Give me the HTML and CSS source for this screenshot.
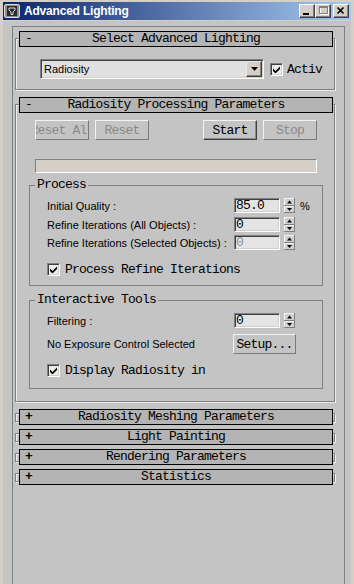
FILE: index.html
```
<!DOCTYPE html>
<html>
<head>
<meta charset="utf-8">
<title>Advanced Lighting</title>
<link rel="stylesheet" href="styles.css">
</head>
<body>
<div class="window">
  <div class="titlebar">
    <svg class="app-icon" width="16" height="14" viewBox="0 0 16 14">
      <rect x="0.5" y="0.5" width="15" height="13" rx="1.5" fill="#8e8e8e" stroke="#dcdcdc"/>
      <rect x="3" y="2" width="10" height="10" fill="#2c2c2c"/>
      <path d="M5 4h6v2l-2 2v2.5H7V8L5 6z" fill="none" stroke="#d8d8d8"/>
    </svg>
    <span class="title">Advanced Lighting</span>
    <div class="caption-btns">
      <span class="cbtn"><svg width="14" height="12" viewBox="0 0 14 12"><rect x="3" y="8" width="6" height="2" fill="#000"/></svg></span>
      <span class="cbtn"><svg width="14" height="12" viewBox="0 0 14 12"><path d="M4.5 2.5h8v7h-8z" fill="none" stroke="#fff"/><path d="M3.5 1.5h8v7h-8z" fill="none" stroke="#808080"/><rect x="3" y="1" width="9" height="2" fill="#808080"/></svg></span>
      <span class="cbtn close"><svg width="14" height="12" viewBox="0 0 14 12"><path d="M3.5 2.5L9.5 8.5M9.5 2.5L3.5 8.5" stroke="#000" stroke-width="1.7"/></svg></span>
    </div>
  </div>
  <div class="client">
    <div class="panel">
      <section class="rollout">
        <div class="rh mono"><span class="rh-sign">-</span><span class="rh-title">Select Advanced Lighting</span><span></span></div>
        <div class="rbody body1">
          <div class="select-row">
            <div class="dropdown sunken"><span>Radiosity</span><span class="dd-btn"><svg width="7" height="4" viewBox="0 0 7 4"><path d="M0 0h7L3.5 4z" fill="#000"/></svg></span></div>
            <span class="check"><svg width="7" height="7" viewBox="0 0 7 7"><path d="M0 2.5L2.5 5L7 0.5V3L2.5 7.5L0 5z" fill="#000"/></svg></span>
            <span class="check-label mono">Activ</span>
          </div>
        </div>
      </section>

      <section class="rollout">
        <div class="rh mono"><span class="rh-sign">-</span><span class="rh-title">Radiosity Processing Parameters</span><span></span></div>
        <div class="rbody body2">
          <div class="btn-row">
            <span class="btn mono disabled">Reset All</span>
            <span class="btn mono disabled">Reset</span>
            <span class="btn mono start">Start</span>
            <span class="btn mono disabled">Stop</span>
          </div>
          <div class="progress"></div>

          <div class="group g1">
            <div class="group-title mono">Process</div>
            <div class="frow first">
              <span class="flabel">Initial Quality :</span>
              <span class="field sunken mono">85.0</span>
              <svg class="spin" width="11" height="15" viewBox="0 0 11 15"><rect width="11" height="15" fill="#d0d0d0"/><path d="M0 0.5H11M0.5 0V15M0 8.5H11" stroke="#f4f4f4"/><path d="M0 14.5H11M10.5 0V15M0 7.5H11" stroke="#808080"/><path d="M5.5 2.5L8 5.5H3z" fill="#000"/><path d="M3 10H8L5.5 13z" fill="#000"/></svg>
              <span class="pct">%</span>
            </div>
            <div class="frow">
              <span class="flabel">Refine Iterations (All Objects) :</span>
              <span class="field sunken mono">0</span>
              <svg class="spin" width="11" height="15" viewBox="0 0 11 15"><rect width="11" height="15" fill="#d0d0d0"/><path d="M0 0.5H11M0.5 0V15M0 8.5H11" stroke="#f4f4f4"/><path d="M0 14.5H11M10.5 0V15M0 7.5H11" stroke="#808080"/><path d="M5.5 2.5L8 5.5H3z" fill="#000"/><path d="M3 10H8L5.5 13z" fill="#000"/></svg>
            </div>
            <div class="frow r3">
              <span class="flabel">Refine Iterations (Selected Objects) :</span>
              <span class="field sunken mono dim">0</span>
              <svg class="spin" width="11" height="15" viewBox="0 0 11 15"><rect width="11" height="15" fill="#d0d0d0"/><path d="M0 0.5H11M0.5 0V15M0 8.5H11" stroke="#f4f4f4"/><path d="M0 14.5H11M10.5 0V15M0 7.5H11" stroke="#808080"/><path d="M5.5 2.5L8 5.5H3z" fill="#000"/><path d="M3 10H8L5.5 13z" fill="#000"/></svg>
            </div>
            <div class="crow">
              <span class="check"><svg width="7" height="7" viewBox="0 0 7 7"><path d="M0 2.5L2.5 5L7 0.5V3L2.5 7.5L0 5z" fill="#000"/></svg></span>
              <span class="mono">Process Refine Iterations</span>
            </div>
          </div>

          <div class="group g2">
            <div class="group-title mono">Interactive Tools</div>
            <div class="frow first">
              <span class="flabel">Filtering :</span>
              <span class="field sunken mono">0</span>
              <svg class="spin" width="11" height="15" viewBox="0 0 11 15"><rect width="11" height="15" fill="#d0d0d0"/><path d="M0 0.5H11M0.5 0V15M0 8.5H11" stroke="#f4f4f4"/><path d="M0 14.5H11M10.5 0V15M0 7.5H11" stroke="#808080"/><path d="M5.5 2.5L8 5.5H3z" fill="#000"/><path d="M3 10H8L5.5 13z" fill="#000"/></svg>
            </div>
            <div class="srow">
              <span class="slabel">No Exposure Control Selected</span>
              <span class="btn mono setup">Setup...</span>
            </div>
            <div class="crow c2">
              <span class="check"><svg width="7" height="7" viewBox="0 0 7 7"><path d="M0 2.5L2.5 5L7 0.5V3L2.5 7.5L0 5z" fill="#000"/></svg></span>
              <span class="mono">Display Radiosity in</span>
            </div>
          </div>
        </div>
      </section>

      <section class="rollout">
        <div class="rh mono"><span class="rh-sign plus">+</span><span class="rh-title">Radiosity Meshing Parameters</span><span></span></div>
        <div class="bracket"></div>
      </section>
      <section class="rollout">
        <div class="rh mono"><span class="rh-sign plus">+</span><span class="rh-title">Light Painting</span><span></span></div>
        <div class="bracket"></div>
      </section>
      <section class="rollout">
        <div class="rh mono"><span class="rh-sign plus">+</span><span class="rh-title">Rendering Parameters</span><span></span></div>
        <div class="bracket"></div>
      </section>
      <section class="rollout">
        <div class="rh mono"><span class="rh-sign plus">+</span><span class="rh-title">Statistics</span><span></span></div>
        <div class="bracket"></div>
      </section>
    </div>
  </div>
</div>
</body>
</html>
```

FILE: styles.css
```
* { box-sizing: border-box; }
html, body { margin: 0; padding: 0; }
body {
  background: #d4d0c8;
  font-family: "Liberation Sans", Arial, sans-serif;
  font-size: 11px;
  color: #000;
}
.mono {
  font-family: "Liberation Mono", "Courier New", monospace;
  font-size: 13px;
  letter-spacing: -0.8px;
}
.window {
  width: 354px;
  height: 584px;
  display: flex;
  flex-direction: column;
  padding: 2px 3px 0 3px;
  background: #d4d0c8;
  overflow: hidden;
}
.titlebar {
  height: 18px;
  flex: none;
  display: flex;
  align-items: center;
  padding: 0 2px 0 1px;
  background: linear-gradient(to right, #0a246a, #a6caf0);
}
.app-icon { flex: none; }
.title {
  flex: 1;
  margin-left: 4px;
  color: #fff;
  font-weight: bold;
  font-size: 12px;
  letter-spacing: -0.2px;
  white-space: nowrap;
}
.caption-btns { display: flex; align-items: center; }
.cbtn {
  width: 16px;
  height: 14px;
  background: #d4d0c8;
  border: 1px solid;
  border-color: #fff #404040 #404040 #fff;
  box-shadow: inset -1px -1px 0 #808080;
  display: flex;
}
.cbtn svg { display: block; }
.cbtn.close { margin-left: 2px; }

.client {
  flex: 1;
  display: flex;
  flex-direction: column;
  margin-top: 1px;
  padding: 5px 6px 0 9px;
  background: #c4c4c4;
}
.panel {
  flex: 1;
  border: 1px solid #808080;
  border-bottom: none;
  padding: 4px 0 0 2px;
}
.rollout { width: 320px; margin-bottom: 7px; }
.rh {
  position: relative;
  z-index: 1;
  height: 16px;
  margin: 0 2px 0 4px;
  border: 1px solid #000;
  background: #b4b4b4;
  display: grid;
  grid-template-columns: 20px 1fr 20px;
  align-items: center;
  line-height: 14px;
  white-space: nowrap;
}
.rh-sign { padding-left: 5px; }
.rh-sign.plus { font-weight: bold; }
.rh-title { text-align: center; }
.rbody, .bracket {
  border: 1px solid #808080;
  box-shadow: 1px 1px 0 #ececec, inset 1px 1px 0 #ececec;
}
.rbody { margin-top: -9px; }
.bracket { margin-top: -12px; height: 9px; }

.body1 { padding: 20px 0 10px 24px; }
.select-row { display: flex; align-items: center; }
.sunken {
  border: 1px solid;
  border-color: #808080 #fff #fff #808080;
  box-shadow: inset 1px 1px 0 #404040, inset -1px -1px 0 #d4d0c8;
}
.dropdown {
  width: 224px;
  height: 20px;
  display: flex;
  align-items: center;
  padding-left: 3px;
  background: #e0e0e0;
}
.dd-btn {
  margin-left: auto;
  margin-right: 1px;
  width: 16px;
  height: 16px;
  background: #d4d0c8;
  border: 1px solid;
  border-color: #e8e8e8 #404040 #404040 #e8e8e8;
  box-shadow: inset -1px -1px 0 #808080;
  display: flex;
  align-items: center;
  justify-content: center;
}
.check {
  flex: none;
  width: 13px;
  height: 13px;
  border: 1px solid;
  border-color: #808080 #fff #fff #808080;
  box-shadow: inset 1px 1px 0 #404040, inset -1px -1px 0 #d4d0c8;
  background: #ececec;
  display: flex;
  align-items: center;
  justify-content: center;
}
.select-row .check { margin-left: 6px; }
.check-label {
  margin-left: 4px;
  white-space: nowrap;
}

.body2 { padding: 15px 11px 12px 13px; }
.btn-row {
  display: flex;
  margin: 0 6px;
  height: 20px;
}
.btn {
  width: 54px;
  height: 20px;
  display: flex;
  align-items: center;
  justify-content: center;
  overflow: hidden;
  white-space: nowrap;
  border: 1px solid;
  border-color: #f2f2f2 #7a7a7a #7a7a7a #f2f2f2;
  background: #c4c4c4;
}
.btn.disabled { color: #8a8a8a; }
.btn-row .btn + .btn { margin-left: 6px; }
.btn-row .btn.start { margin-left: auto; }
.btn.start { border-color: #f2f2f2 #404040 #404040 #f2f2f2; box-shadow: inset -1px -1px 0 #8a8a8a; }
.progress {
  margin: 19px 6px 0;
  height: 14px;
  border: 1px solid;
  border-color: #808080 #fff #fff #808080;
  background: #d4d0c8;
}
.group {
  border: 1px solid #808080;
  padding: 0 0 9px 17px;
}
.g1 { margin-top: 12px; }
.g2 { margin-top: 14px; padding-bottom: 11px; }
.group-title {
  width: max-content;
  height: 14px;
  margin: -8px 0 0 -12px;
  padding: 0 2px;
  line-height: 14px;
  background: #c4c4c4;
}
.frow {
  display: flex;
  align-items: center;
  height: 15px;
  margin-top: 4px;
}
.frow.r3 { margin-top: 3px; }
.frow.first { margin-top: 6px; }
.flabel { width: 187px; flex: none; white-space: nowrap; }
.field {
  width: 46px;
  height: 15px;
  flex: none;
  padding-left: 1px;
  line-height: 13px;
  background: #e4e4e4;
}
.field.dim { color: #909090; }
.spin { margin-left: 4px; flex: none; display: block; }
.pct { margin-left: 5px; }
.crow {
  display: flex;
  align-items: center;
  margin-top: 13px;
  height: 13px;
}
.crow .mono { margin-left: 5px; white-space: nowrap; }
.crow.c2 { margin-top: 10px; }
.srow {
  display: flex;
  align-items: center;
  height: 20px;
  margin-top: 6px;
}
.slabel { width: 186px; flex: none; white-space: nowrap; }
.btn.setup { width: 63px; }
```
